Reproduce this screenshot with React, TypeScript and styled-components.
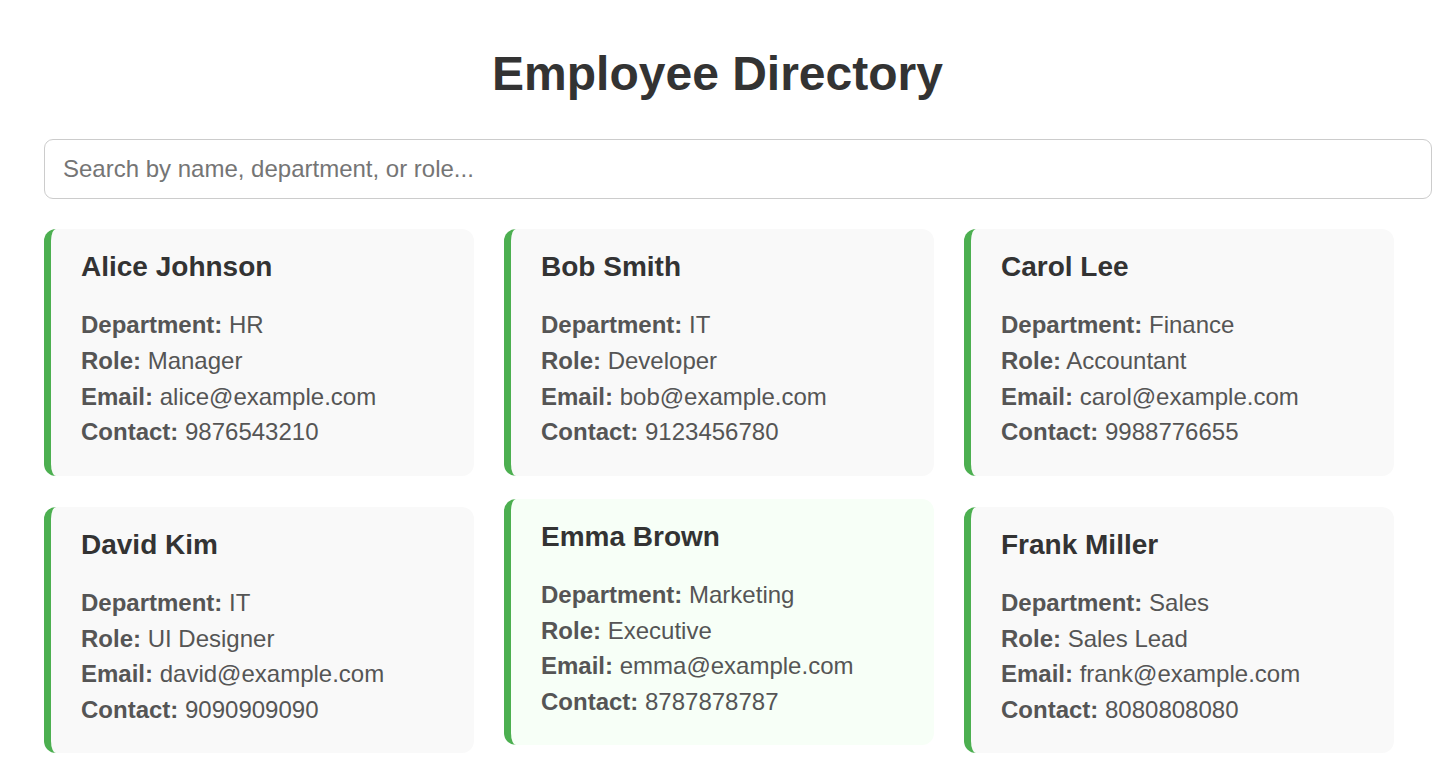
import React from "react";
import styled, { createGlobalStyle } from "styled-components";

const GlobalStyle = createGlobalStyle`
  html, body {
    margin: 0;
    padding: 0;
    background: #ffffff;
    font-family: "Liberation Sans", Arial, sans-serif;
  }
  * { box-sizing: border-box; }
`;

const Page = styled.div`
  padding: 46px 0 24px;
`;

const Container = styled.div`
  width: 1388px;
  margin-left: 44px;
`;

const Title = styled.h1`
  margin: 0 0 38px;
  text-align: center;
  font-size: 48px;
  font-weight: 700;
  line-height: 1.15;
  color: #333333;
`;

const SearchInput = styled.input`
  display: block;
  width: 100%;
  height: 60px;
  margin: 0 0 30px;
  padding: 15px 18px;
  border: 1px solid #cccccc;
  border-radius: 9px;
  font-family: "Liberation Sans", Arial, sans-serif;
  font-size: 24px;
  color: #333333;
  outline: none;
  &::placeholder {
    color: #757575;
  }
`;

const Grid = styled.div`
  display: grid;
  grid-template-columns: repeat(3, 430px);
  column-gap: 30px;
  row-gap: 31px;
`;

const Card = styled.div<{ $hovered?: boolean }>`
  background: ${(p) => (p.$hovered ? "#f7fff7" : "#f9f9f9")};
  border-left: 7px solid #4caf50;
  border-radius: 12px;
  padding: 22px 30px 23px 30px;
  transform: ${(p) => (p.$hovered ? "translateY(-8px)" : "none")};
`;

const Name = styled.h3`
  margin: 0 0 28px;
  font-size: 28px;
  font-weight: 700;
  line-height: 1.15;
  color: #333333;
`;

const Field = styled.p`
  margin: 8px 0;
  font-size: 24px;
  line-height: 1.15;
  color: #555555;
  &:last-child {
    margin-bottom: 7px;
  }
`;

const Label = styled.strong`
  font-weight: 700;
`;

type Employee = {
  name: string;
  department: string;
  role: string;
  email: string;
  contact: string;
};

const employees: Employee[] = [
  { name: "Alice Johnson", department: "HR", role: "Manager", email: "alice@example.com", contact: "9876543210" },
  { name: "Bob Smith", department: "IT", role: "Developer", email: "bob@example.com", contact: "9123456780" },
  { name: "Carol Lee", department: "Finance", role: "Accountant", email: "carol@example.com", contact: "9988776655" },
  { name: "David Kim", department: "IT", role: "UI Designer", email: "david@example.com", contact: "9090909090" },
  { name: "Emma Brown", department: "Marketing", role: "Executive", email: "emma@example.com", contact: "8787878787" },
  { name: "Frank Miller", department: "Sales", role: "Sales Lead", email: "frank@example.com", contact: "8080808080" },
];

export default function App() {
  const [query, setQuery] = React.useState("");
  const q = query.trim().toLowerCase();
  const list = employees.filter(
    (e) =>
      !q ||
      e.name.toLowerCase().includes(q) ||
      e.department.toLowerCase().includes(q) ||
      e.role.toLowerCase().includes(q)
  );
  return (
    <>
      <GlobalStyle />
      <Page>
        <Title>Employee Directory</Title>
        <Container>
          <SearchInput
            type="text"
            placeholder="Search by name, department, or role..."
            value={query}
            onChange={(e) => setQuery(e.target.value)}
          />
          <Grid>
            {list.map((e) => (
              <Card key={e.email} $hovered={e.name === "Emma Brown"}>
                <Name>{e.name}</Name>
                <Field>
                  <Label>Department:</Label> {e.department}
                </Field>
                <Field>
                  <Label>Role:</Label> {e.role}
                </Field>
                <Field>
                  <Label>Email:</Label> {e.email}
                </Field>
                <Field>
                  <Label>Contact:</Label> {e.contact}
                </Field>
              </Card>
            ))}
          </Grid>
        </Container>
      </Page>
    </>
  );
}
